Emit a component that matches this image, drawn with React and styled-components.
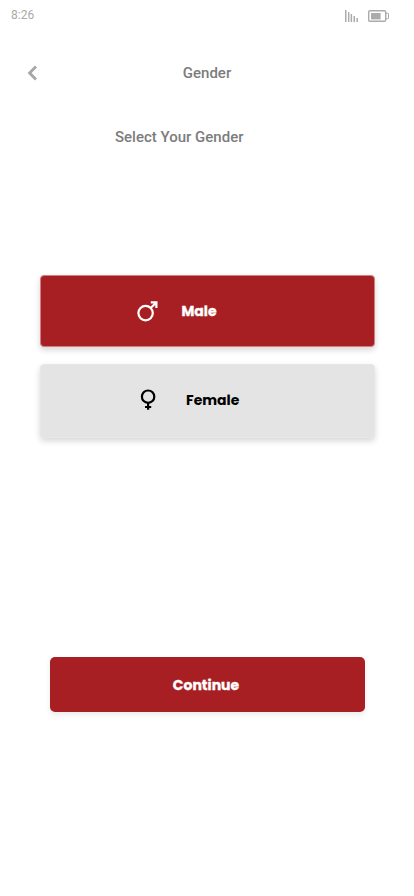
import React from "react";
import styled, { createGlobalStyle } from "styled-components";

const GlobalStyle = createGlobalStyle`
  * { box-sizing: border-box; }
  body { margin: 0; background: #fff; }
`;

const Screen = styled.main`
  width: 414px;
  height: 896px;
  display: flex;
  flex-direction: column;
  background: #fff;
  font-family: Roboto, sans-serif;
  overflow: hidden;
`;

const StatusBar = styled.div`
  height: 32px;
  padding: 0 25px 0 11px;
  display: flex;
  justify-content: space-between;
  align-items: center;
`;

const Clock = styled.span`
  font-size: 12px;
  line-height: 14px;
  color: #a9a9a9;
  margin-bottom: 2px;
`;

const StatusIcons = styled.div`
  display: flex;
  gap: 9px;
`;

const Header = styled.header`
  height: 82px;
  display: grid;
  grid-template-columns: 64px 1fr 64px;
  align-items: center;
`;

const BackButton = styled.button`
  width: 64px;
  height: 40px;
  padding: 0 0 1px 26px;
  border: 0;
  background: none;
  display: flex;
  align-items: center;
`;

const Title = styled.h1`
  margin: 0;
  text-align: center;
  font-size: 15px;
  line-height: 18px;
  font-weight: 500;
  color: #7c7c7c;
`;

const Prompt = styled.h2`
  margin: 14px 0 0 115px;
  font-size: 15px;
  line-height: 18px;
  font-weight: 500;
  color: #7c7c7c;
`;

const Options = styled.div`
  margin: 129px 39px 0 40px;
  display: flex;
  flex-direction: column;
  gap: 17px;
`;

const Option = styled.button`
  height: ${(p) => (p.$selected ? 72 : 74)}px;
  padding: ${(p) => (p.$selected ? "0 0 0 95px" : "0 0 2px 99px")};
  display: flex;
  align-items: center;
  gap: ${(p) => (p.$selected ? 23.5 : 28)}px;
  border: 1px solid ${(p) => (p.$selected ? "#d07f82" : "#e7e7e7")};
  border-radius: 4px;
  background: ${(p) => (p.$selected ? "#a71f23" : "#e4e4e4")};
  color: ${(p) => (p.$selected ? "#fff" : "#000")};
  box-shadow: 0 3px 6px rgba(0, 0, 0, 0.16);
`;

const Label = styled.span`
  font-family: Poppins, Inter, sans-serif;
  font-size: 14px;
  line-height: 20px;
  font-weight: 700;
  -webkit-text-stroke: ${(p) => (p.$heavy ? "0.3px currentColor" : "0")};
`;

const ContinueButton = styled.button`
  margin: 219px 49px 0 50px;
  height: 55px;
  padding: 0 3px 0 0;
  border: 0;
  border-radius: 5px;
  background: #a71f23;
  color: #fff;
  box-shadow: 0 3px 6px rgba(0, 0, 0, 0.08);
`;

const SignalIcon = () => (
  <svg width="14" height="12" viewBox="0 0 14 12" fill="#ababab">
    <path d="M0 0h1.5v12H0zM3 2h1.4v10H3zM5.6 4h1.5v8H5.6zM8.5 6h1.5v6H8.5zM11.4 8h1.5v4h-1.5z" />
  </svg>
);

const BatteryIcon = () => (
  <svg width="21" height="12" viewBox="0 0 21 12">
    <rect x=".7" y=".7" width="17" height="10.6" rx="1.3" fill="none" stroke="#ababab" strokeWidth="1.4" />
    <path d="M18 3.3h1.8q.7 0 .7.7v4q0 .7-.7.7H18" fill="none" stroke="#ababab" />
    <rect x="3" y="3" width="9.6" height="6.4" fill="#ababab" />
  </svg>
);

const BackIcon = () => (
  <svg width="12" height="18" viewBox="0 0 12 18">
    <path d="M10 2.6 3.6 9l6.4 6.4" fill="none" stroke="#a7a7a7" strokeWidth="2.8" />
  </svg>
);

const MaleIcon = () => (
  <svg width="22" height="22" viewBox="0 0 22 22" fill="none" stroke="currentColor" strokeWidth="2.2">
    <circle cx="9.6" cy="13.1" r="7.2" />
    <path d="M14.6 8 20.2 2.8M14.8 2.3h5.6V8" />
  </svg>
);

const FemaleIcon = () => (
  <svg width="18" height="22" viewBox="0 0 18 22" fill="none" stroke="currentColor" strokeWidth="2.2">
    <circle cx="8.1" cy="7.7" r="6.2" />
    <path d="M8.1 13.9v6.9M5 18h6.2" />
  </svg>
);

export default function App() {
  return (
    <>
      <GlobalStyle />
      <Screen>
        <StatusBar>
          <Clock>8:26</Clock>
          <StatusIcons>
            <SignalIcon />
            <BatteryIcon />
          </StatusIcons>
        </StatusBar>
        <Header>
          <BackButton aria-label="Back">
            <BackIcon />
          </BackButton>
          <Title>Gender</Title>
        </Header>
        <Prompt>Select Your Gender</Prompt>
        <Options>
          <Option $selected>
            <MaleIcon />
            <Label $heavy>Male</Label>
          </Option>
          <Option>
            <FemaleIcon />
            <Label>Female</Label>
          </Option>
        </Options>
        <ContinueButton>
          <Label $heavy>Continue</Label>
        </ContinueButton>
      </Screen>
    </>
  );
}
